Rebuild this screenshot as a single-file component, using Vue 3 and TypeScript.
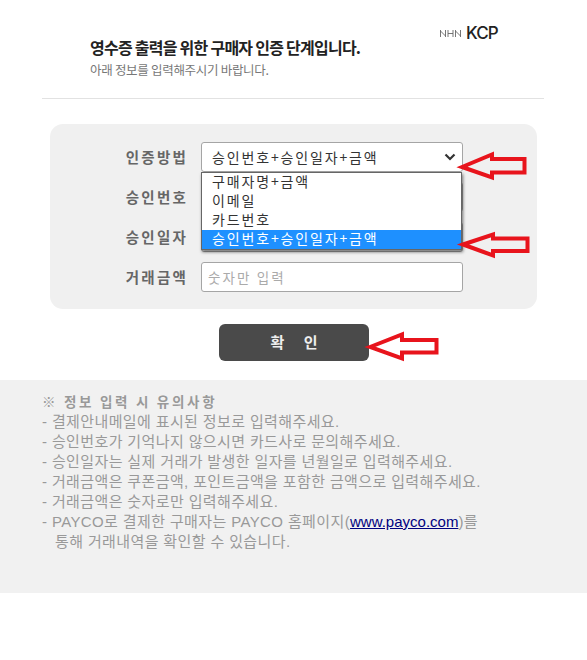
<script setup lang="ts">
const options = ['구매자명+금액', '이메일', '카드번호', '승인번호+승인일자+금액']
const notes = [
  '결제안내메일에 표시된 정보로 입력해주세요.',
  '승인번호가 기억나지 않으시면 카드사로 문의해주세요.',
  '승인일자는 실제 거래가 발생한 일자를 년월일로 입력해주세요.',
  '거래금액은 쿠폰금액, 포인트금액을 포함한 금액으로 입력해주세요.',
  '거래금액은 숫자로만 입력해주세요.',
]
const arrows = [
  'M462 167 492 154.500V159H524.500V172.500H492V177.500Z',
  'M463 244.500 493 234.500V238.500H527.500V251H493V255.500Z',
  'M370 347 402 334.500V340H436.500V352.500H402V358.500Z',
]
</script>

<template>
  <div class="page">
    <header class="head">
      <div class="logo">
        <svg class="nhn" width="21" height="7" viewBox="0 0 21 7" aria-hidden="true">
          <path d="M.5 0v7M5.5 0v7M.5 1l5 5M8 0v7M13 0v7M8 3.500h5M15.500 0v7M20.500 0v7M15.500 1l5 5" fill="none" stroke="#666" stroke-width=".9" />
        </svg>
        <span>KCP</span>
      </div>
      <h1>영수증 출력을 위한 구매자 인증 단계입니다.</h1>
      <p>아래 정보를 입력해주시기 바랍니다.</p>
    </header>

    <section class="panel">
      <div class="row">
        <label>인증방법</label>
        <div class="field select-wrap">
          <div class="select">
            <span>승인번호+승인일자+금액</span>
            <svg width="12" height="8" viewBox="0 0 12 8" aria-hidden="true">
              <path d="M1.500 1.500 6 6l4.500-4.500" fill="none" stroke="#333" stroke-width="2.200" />
            </svg>
          </div>
          <ul class="menu">
            <li v-for="(o, i) in options" :key="o" :class="{ sel: i === 3 }">{{ o }}</li>
          </ul>
        </div>
      </div>
      <div class="row">
        <label>승인번호</label>
        <div class="field box"></div>
      </div>
      <div class="row">
        <label>승인일자</label>
        <div class="field box"></div>
      </div>
      <div class="row">
        <label>거래금액</label>
        <div class="field box ph">숫자만 입력</div>
      </div>
    </section>

    <div class="btn-row">
      <button class="btn" type="button">확 인</button>
    </div>

    <section class="notice">
      <h2>※ 정보 입력 시 유의사항</h2>
      <p v-for="n in notes" :key="n">- {{ n }}</p>
      <p>- PAYCO로 결제한 구매자는 PAYCO 홈페이지(<a href="#">www.payco.com</a>)를</p>
      <p class="indent">통해 거래내역을 확인할 수 있습니다.</p>
    </section>

    <svg class="arrows" width="587" height="660" viewBox="0 0 587 660" aria-hidden="true">
      <path
        v-for="d in arrows"
        :key="d"
        :d="d"
        fill="none"
        stroke="#e8141c"
        stroke-width="4"
      />
    </svg>
  </div>
</template>

<style>
html, body { margin: 0; background: #fff; }
</style>

<style scoped>
.page {
  position: relative;
  width: 587px;
  height: 660px;
  overflow: hidden;
  font-family: "Noto Sans CJK KR", "Noto Sans", sans-serif;
  background: #fff;
}
.head {
  position: relative;
  height: 99px;
  margin: 0 43px 0 42px;
  padding: 37px 0 0 48px;
  box-sizing: border-box;
  border-bottom: 1px solid #e2e2e2;
}
.logo {
  position: absolute;
  top: 23px;
  left: 398px;
  display: flex;
  align-items: center;
  gap: 5px;
  color: #222;
  font-family: Inter, "Liberation Sans", sans-serif;
  font-size: 17px;
  font-weight: 500;
  line-height: 20px;
  letter-spacing: -0.9px;
}
h1 {
  margin: 0;
  font-size: 16px;
  line-height: 20px;
  font-weight: 700;
  letter-spacing: -0.75px;
  color: #222;
}
.head p {
  margin: 4px 0 0;
  font-size: 12.500px;
  line-height: 18px;
  letter-spacing: -0.3px;
  color: #777;
}
.panel {
  margin: 25px 50px 0;
  padding: 18px 0 17px;
  display: flex;
  flex-direction: column;
  gap: 10px;
  background: #f0f0f0;
  border-radius: 13px;
}
.row {
  display: flex;
  align-items: center;
  height: 30px;
}
label {
  width: 138px;
  padding-bottom: 2px;
  text-align: right;
  font-size: 14.500px;
  font-weight: 700;
  letter-spacing: 2.200px;
  color: #666;
}
.field {
  width: 262px;
  height: 30px;
  margin-left: 13px;
  box-sizing: border-box;
}
.box {
  background: #fff;
  border: 1px solid #a5a5a5;
  border-radius: 3px;
}
.ph {
  padding-left: 6px;
  font-size: 13.500px;
  line-height: 28px;
  letter-spacing: 2.100px;
  color: #aaa;
}
.select-wrap { position: relative; }
.select {
  display: flex;
  align-items: center;
  justify-content: space-between;
  height: 30px;
  padding: 0 6px 0 10px;
  box-sizing: border-box;
  background: #fff;
  border: 1px solid #a5a5a5;
  border-radius: 3px;
  font-size: 14px;
  letter-spacing: 1.850px;
  color: #333;
}
.menu {
  position: absolute;
  z-index: 2;
  top: 30px;
  left: 0;
  width: 261px;
  height: 78px;
  margin: 0;
  padding: 0;
  box-sizing: border-box;
  list-style: none;
  background: #fff;
  border: 1px solid #666;
  box-shadow: 1px 2px 3px rgba(0, 0, 0, 0.55);
}
.menu li {
  height: 19px;
  padding-left: 10px;
  font-size: 14px;
  line-height: 17px;
  letter-spacing: 1.850px;
  color: #333;
}
.menu li.sel {
  background: #1e90ff;
  color: #fff;
}
.btn-row {
  display: flex;
  margin: 15px 0 19px 219px;
}
.btn {
  width: 150px;
  height: 37px;
  padding: 0 0 2px 2px;
  border: 0;
  border-radius: 6px;
  background: #4a4a4a;
  color: #eee;
  font-family: inherit;
  font-size: 15px;
  font-weight: 700;
  letter-spacing: 2px;
  word-spacing: 12px;
}
.notice {
  height: 213px;
  padding: 11px 0 0 42px;
  box-sizing: border-box;
  background: #f1f1f1;
  color: #999;
  font-family: "Liberation Sans", "Noto Sans CJK KR", sans-serif;
  font-size: 15px;
  line-height: 20px;
  letter-spacing: 0.380px;
}
.notice h2 {
  margin: 0 0 1px;
  font-family: "Noto Sans CJK KR", sans-serif;
  font-size: 13.500px;
  line-height: 20px;
  font-weight: 700;
  letter-spacing: 2.700px;
  color: #999;
}
.notice p {
  margin: 0;
  white-space: nowrap;
}
.notice .indent { padding-left: 13px; }
.notice a {
  color: #000080;
  letter-spacing: 0;
  text-decoration: underline;
}
.arrows {
  position: absolute;
  z-index: 3;
  top: 0;
  left: 0;
  pointer-events: none;
}
</style>
